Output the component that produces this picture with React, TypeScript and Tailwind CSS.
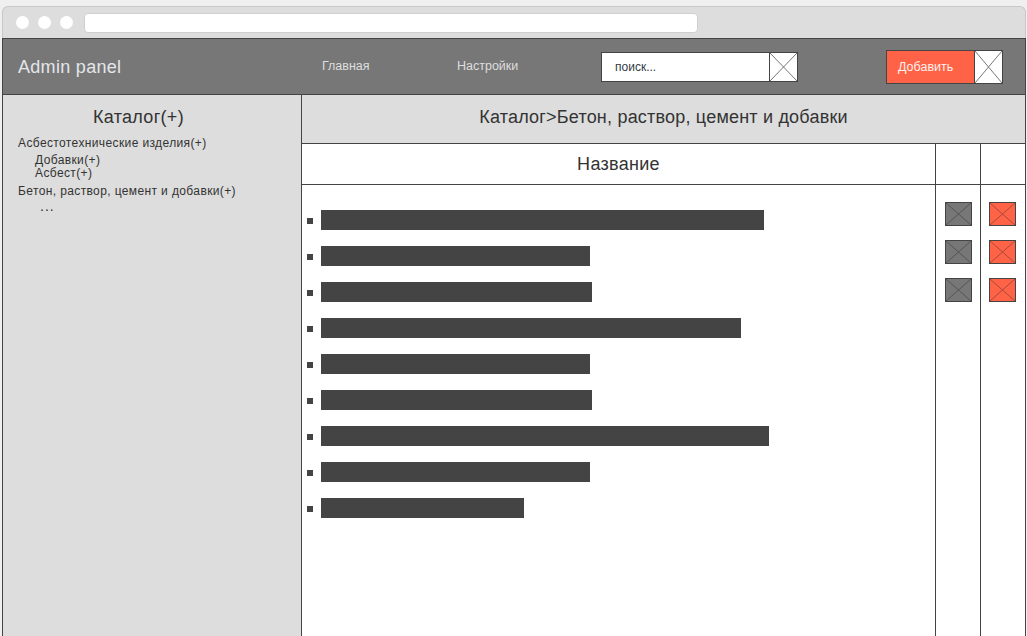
import React from "react";

const bars = [443, 269, 271, 420, 269, 271, 448, 269, 203];

function XBox({ bg, line, w, h, className = "" }: { bg: string; line: string; w: number; h: number; className?: string }) {
  return (
    <div className={className} style={{ width: w, height: h, background: bg }}>
      <svg width={w} height={h} viewBox={`0 0 ${w} ${h}`} className="block">
        <rect x="0.5" y="0.5" width={w - 1} height={h - 1} fill="none" stroke="#444444" strokeWidth="1" />
        <line x1="1" y1="1" x2={w - 1} y2={h - 1} stroke={line} strokeWidth="1" />
        <line x1={w - 1} y1="1" x2="1" y2={h - 1} stroke={line} strokeWidth="1" />
      </svg>
    </div>
  );
}

export default function App() {
  return (
    <div className="w-[1027px] h-[636px] overflow-hidden bg-[#efefef] pt-[6px] pl-[2px] font-['Liberation_Sans',Arial,sans-serif]">
      <div className="w-[1024px] h-[630px] flex flex-col">
        {/* browser chrome */}
        <div className="h-[32px] shrink-0 bg-[#dddddd] border-t border-x border-[#c8c8c8] rounded-t-[6px] flex items-start pt-[6px] pl-[13px]">
          <div className="flex gap-[9px] mt-[3px]">
            <div className="w-[13px] h-[13px] rounded-full bg-white" />
            <div className="w-[13px] h-[13px] rounded-full bg-white" />
            <div className="w-[13px] h-[13px] rounded-full bg-white" />
          </div>
          <div className="ml-[11px] w-[614px] h-[20px] bg-white rounded-[4px] border border-[#cfcfcf]" />
        </div>

        {/* header */}
        <div className="h-[57px] shrink-0 bg-[#777777] border-y border-x border-[#444444] flex items-center pl-[15px]">
          <span className="w-[304px] text-[18px] tracking-[0.3px] text-[#e3e6ea] leading-none mt-[1px]">Admin panel</span>
          <span className="w-[135px] text-[12.5px] text-[#dedede] leading-none -mt-[1px]">Главная</span>
          <span className="w-[144px] text-[12.5px] text-[#dedede] leading-none -mt-[1px]">Настройки</span>
          <div className="flex h-[30px] mt-[1px]">
            <div className="w-[169px] h-[30px] bg-white border border-[#444444] flex items-center pl-[13px] text-[12px] text-[#333a44]">
              поиск...
            </div>
            <XBox bg="#ffffff" line="#777777" w={29} h={30} className="-ml-[1px]" />
          </div>
          <div className="flex h-[34px] ml-[88px] mt-[1px]">
            <div className="w-[89px] h-[34px] bg-[#ff6347] border border-[#444444] flex items-center pl-[11px] text-[12.5px] text-[#fff2ee]">
              Добавить
            </div>
            <XBox bg="#ffffff" line="#777777" w={29} h={34} className="-ml-[1px]" />
          </div>
        </div>

        {/* body */}
        <div className="flex-1 flex min-h-0">
          {/* sidebar */}
          <div className="w-[300px] shrink-0 bg-[#dddddd] border-x border-[#444444] pt-[11px] text-[#333333]">
            <div className="h-[22px] leading-[22px] text-[18px] tracking-[0.3px] pl-[90px]">Каталог(+)</div>
            <div className="pl-[15px] text-[12px] tracking-[0.38px]">
              <div className="mt-[8px] leading-[14px]">Асбестотехнические изделия(+)</div>
              <div className="pl-[17px] mt-[4px] leading-[13px]">
                <div>Добавки(+)</div>
                <div>Асбест(+)</div>
              </div>
              <div className="mt-[4px] leading-[14px]">Бетон, раствор, цемент и добавки(+)</div>
              <div className="pl-[22px] mt-[1px] text-[14px] leading-[14px] tracking-[1px]">...</div>
            </div>
          </div>

          {/* main */}
          <div className="w-[724px] shrink-0 bg-white border-r border-[#444444] flex flex-col">
            <div className="h-[49px] shrink-0 bg-[#dddddd] border-b border-[#444444] flex items-center justify-center text-[18px] tracking-[0.2px] text-[#333333] pb-[3px]">
              Каталог&gt;Бетон, раствор, цемент и добавки
            </div>
            <div className="flex-1 flex">
              {/* name column */}
              <div className="flex-1 flex flex-col">
                <div className="h-[41px] shrink-0 border-b border-[#444444] flex items-center justify-center text-[18px] tracking-[0.3px] text-[#333333]">
                  Название
                </div>
                <div className="flex flex-col gap-[16px] pt-[25px] pl-[5px]">
                  {bars.map((w, i) => (
                    <div key={i} className="flex items-center h-[20px]">
                      <div className="w-[6px] h-[6px] bg-[#444444] mt-[2px]" />
                      <div className="ml-[8px] h-[20px] bg-[#444444]" style={{ width: w }} />
                    </div>
                  ))}
                </div>
              </div>
              {/* edit column */}
              <div className="w-[45px] shrink-0 border-l border-[#444444] flex flex-col">
                <div className="h-[41px] shrink-0 border-b border-[#444444]" />
                <div className="flex flex-col gap-[14px] pt-[17px] pl-[9px]">
                  {[0, 1, 2].map((i) => (
                    <XBox key={i} bg="#777777" line="#555555" w={27} h={24} />
                  ))}
                </div>
              </div>
              {/* delete column */}
              <div className="w-[45px] shrink-0 border-l border-[#444444] flex flex-col">
                <div className="h-[41px] shrink-0 border-b border-[#444444]" />
                <div className="flex flex-col gap-[14px] pt-[17px] pl-[8px]">
                  {[0, 1, 2].map((i) => (
                    <XBox key={i} bg="#ff6347" line="#a94a3a" w={27} h={24} />
                  ))}
                </div>
              </div>
            </div>
          </div>
        </div>
      </div>
    </div>
  );
}
